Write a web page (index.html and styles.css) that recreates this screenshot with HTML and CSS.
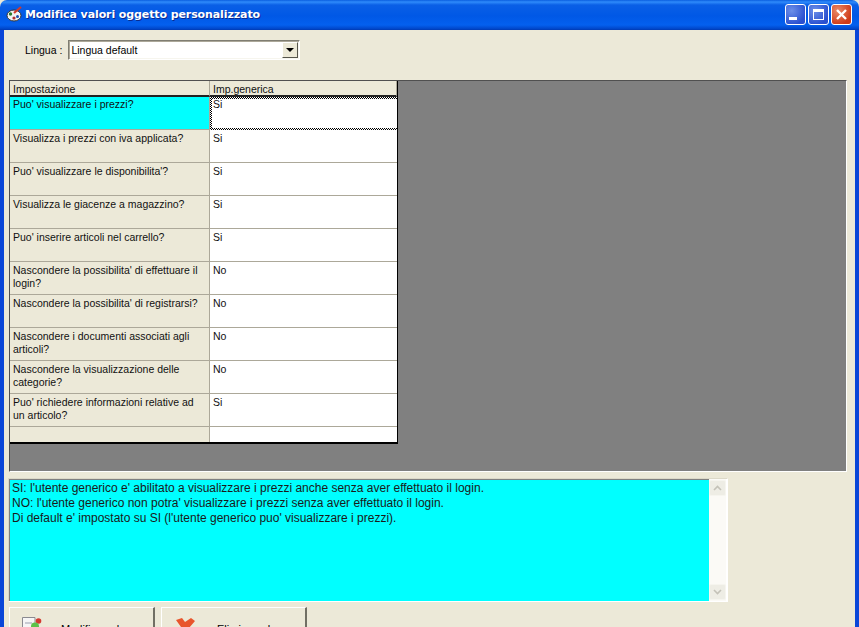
FILE: index.html
```html
<!DOCTYPE html>
<html lang="it">
<head>
<meta charset="utf-8">
<title>Modifica valori oggetto personalizzato</title>
<link rel="stylesheet" href="styles.css">
</head>
<body>
<div class="window">
  <header class="titlebar">
    <svg class="appicon" width="17" height="16" viewBox="0 0 17 16">
      <ellipse cx="8" cy="9.5" rx="7" ry="5.5" fill="#f2f2f2" stroke="#333"/>
      <circle cx="4.5" cy="8" r="1.7" fill="#2a7a2a"/><circle cx="8" cy="12" r="1.6" fill="#b03030"/><circle cx="11.5" cy="10.5" r="1.5" fill="#2050b0"/>
      <path d="M8 7 L15 1" stroke="#d23a2a" stroke-width="2.2"/>
    </svg>
    <span class="title">Modifica valori oggetto personalizzato</span>
    <div class="controls">
      <span class="ctl"><i class="min"></i></span>
      <span class="ctl"><i class="max"></i></span>
      <span class="ctl close"><svg width="13" height="13" viewBox="0 0 13 13"><path d="M2 2 L11 11 M11 2 L2 11" stroke="#fff" stroke-width="2.4"/></svg></span>
    </div>
  </header>
  <main class="client">
    <div class="langrow">
      <label class="langlabel">Lingua :</label>
      <div class="combo"><span class="comboval">Lingua default</span><span class="combobtn"><i></i></span></div>
    </div>
    <section class="panel">
      <div class="grid">
        <div class="cell head">Impostazione</div><div class="cell head">Imp.generica</div>
        <div class="cell key cur">Puo' visualizzare i prezzi?</div><div class="cell val focus">Si</div>
        <div class="cell key">Visualizza i prezzi con iva applicata?</div><div class="cell val">Si</div>
        <div class="cell key">Puo' visualizzare le disponibilita'?</div><div class="cell val">Si</div>
        <div class="cell key">Visualizza le giacenze a magazzino?</div><div class="cell val">Si</div>
        <div class="cell key">Puo' inserire articoli nel carrello?</div><div class="cell val">Si</div>
        <div class="cell key">Nascondere la possibilita' di effettuare il login?</div><div class="cell val">No</div>
        <div class="cell key">Nascondere la possibilita' di registrarsi?</div><div class="cell val">No</div>
        <div class="cell key">Nascondere i documenti associati agli articoli?</div><div class="cell val">No</div>
        <div class="cell key">Nascondere la visualizzazione delle categorie?</div><div class="cell val">No</div>
        <div class="cell key">Puo' richiedere informazioni relative ad un articolo?</div><div class="cell val">Si</div>
        <div class="cell key last"></div><div class="cell val last"></div>
      </div>
    </section>
    <section class="memo">
      <div class="memotext">
        <p>SI: l'utente generico e' abilitato a visualizzare i prezzi anche senza aver effettuato il login.</p>
        <p>NO: l'utente generico non potra' visualizzare i prezzi senza aver effettuato il login.</p>
        <p>Di default e' impostato su SI (l'utente generico puo' visualizzare i prezzi).</p>
      </div>
      <div class="scroll">
        <span class="sbtn"><svg width="9" height="6" viewBox="0 0 9 6"><path d="M1 5 L4.5 1.5 L8 5" fill="none" stroke="#c4c2b8" stroke-width="1.6"/></svg></span>
        <span class="sbtn"><svg width="9" height="6" viewBox="0 0 9 6"><path d="M1 1 L4.5 4.5 L8 1" fill="none" stroke="#c4c2b8" stroke-width="1.6"/></svg></span>
      </div>
    </section>
    <div class="actions">
      <button class="btn">
        <svg class="btnicon" width="24" height="24" viewBox="0 0 24 24">
          <path d="M0.5 1.5 H13 V22 H0.5 Z" fill="#f6f6f6" stroke="#8a8a90"/>
          <path d="M3 7 H10" stroke="#9aa0b0"/>
          <circle cx="16.5" cy="5" r="2.8" fill="#d23a30"/>
          <circle cx="13" cy="10.5" r="4" fill="#5cc24a"/>
        </svg>
        <span>Modifica valore</span>
      </button>
      <button class="btn">
        <svg class="btnicon" width="24" height="24" viewBox="0 0 24 24">
          <path d="M2 4 L8 2 L11 6 L17 2 L21 5 L15 12 L19 22 L13 23 L10 16 L5 23 L1 20 L7 11 Z" fill="#e8552c"/>
        </svg>
        <span>Elimina valore</span>
      </button>
    </div>
  </main>
</div>
</body>
</html>
```
FILE: styles.css
```css
* { box-sizing: border-box; }
html, body { margin: 0; padding: 0; height: 627px; overflow: hidden; }
body { font-family: "Liberation Sans", Arial, sans-serif; font-size: 10.5px; color: #000; background: #ece9d8; }

.window { width: 859px; height: 627px; display: flex; flex-direction: column; overflow: hidden; }

.titlebar {
  flex: 0 0 30px;
  display: flex;
  align-items: center;
  padding: 0 7px 2px 6px;
  background: linear-gradient(180deg, #0a5ee0 0, #2f8bfb 2px, #0a5fe6 5px, #0058e6 16px, #0460ef 25px, #0045c8 29px, #0038b0 30px);
  border-radius: 7px 7px 0 0;
}
.appicon { flex: none; margin-right: 2px; }
.title {
  color: #fff; font-family: "DejaVu Sans", sans-serif; font-weight: 700; font-size: 11px; letter-spacing: -0.1px;
  text-shadow: 1px 1px 0 #0a2a90; white-space: nowrap;
}
.controls { margin-left: auto; display: flex; gap: 2px; }
.ctl {
  width: 21px; height: 21px; border: 1px solid #fff; border-radius: 3px;
  background: radial-gradient(circle at 30% 30%, #6c8fe8, #2a50d0 75%);
  display: flex; align-items: center; justify-content: center;
}
.ctl.close { background: radial-gradient(circle at 30% 30%, #ea8a68, #cf3a18 75%); }
.min { display: block; width: 8px; height: 3px; background: #fff; margin: 9px 5px 0 0; }
.max { display: block; width: 11px; height: 11px; border: 1px solid #fff; border-top-width: 3px; }

.client {
  flex: 1; min-height: 0; display: flex; flex-direction: column;
  background: #ece9d8;
  border-left: 4px solid #0a46d8; border-right: 4px solid #0a46d8;
  padding: 0 9px 0 5px;
}

.langrow { flex: none; height: 50px; display: flex; align-items: flex-start; padding: 10px 0 0 16px; }
.langlabel { margin: 4px 6px 0 0; white-space: nowrap; }
.combo {
  width: 232px; height: 20px; display: flex; align-items: center; background: #fff;
  border: 1px solid; border-color: #7f7d72 #fff #fff #7f7d72;
  box-shadow: inset 1px 1px 0 #aca899, inset -1px -1px 0 #f6f5ee;
  padding: 1px;
}
.comboval { flex: 1; padding-left: 1px; }
.combobtn {
  flex: none; width: 16px; height: 16px; display: flex; align-items: center; justify-content: center;
  background: #ece9d8; border: 1px solid; border-color: #fff #55544c #55544c #fff;
}
.combobtn i { display: block; border: 4px solid transparent; border-top: 4px solid #000; border-bottom: 0; }

.panel {
  flex: none; height: 392px; width: 838px; background: #808080;
  border: 1px solid; border-color: #505050 #fff #fff #505050;
}
.grid {
  width: 388px; display: grid; grid-template-columns: 200px 187px;
  grid-template-rows: 16px repeat(10, 33px) 15px;
  border-right: 1px solid #000; border-bottom: 2px solid #000;
  background: #aca899;
}
.cell {
  padding: 2px 2px 0 3px; line-height: 13px; overflow: hidden;
  border-right: 1px solid #aca899; border-bottom: 1px solid #aca899;
  color: #111;
}
.head { background: #ece9d8; border-bottom: 2px solid #222; padding-top: 2px; }
.key { background: #ece9d8; }
.key.cur { background: #00ffff; padding-top: 1px; }
.val { background: #fff; }
.val:nth-child(even) { border-right: 0; }
.focus {
  padding: 0 0 0 1px;
  line-height: 11px;
  border: 2px solid transparent;
  background: linear-gradient(#fff, #fff) padding-box, repeating-conic-gradient(#000 0 25%, #fff 0 50%) 0 0 / 2px 2px border-box;
}
.last { border-bottom: 0; }

.memo {
  flex: none; margin-top: 6px; width: 720px; height: 124px; display: flex;
  border: 1px solid; border-color: #dcd9c8 #fff #fff #dcd9c8;
  background: #fff;
  margin-left: -1px;
}
.memotext {
  flex: 1; background: #00ffff; padding: 1px 2px; font-size: 12px; line-height: 15px; color: #1a1a1a;
  border-top: 1px solid #808080; border-left: 1px solid #808080;
}
.memotext p { margin: 0; }
.scroll {
  flex: none; width: 17px; display: flex; flex-direction: column; justify-content: space-between;
  background: #fbfaf6; padding: 1px 0; margin-right: 1px;
}
.sbtn {
  height: 16px; display: flex; align-items: center; justify-content: center;
  background: #eeede5; border: 1px solid #f6f5ef; border-radius: 2px;
}

.actions { flex: none; margin-top: 5px; display: flex; gap: 6px; }
.btn {
  flex: none; width: 146px; height: 40px; display: flex; align-items: flex-start; gap: 15px;
  padding: 8px 0 0 12px;
  background: #ece9d8; font: inherit; font-size: 11px; color: #000;
  border: 1px solid; border-color: #fff #716f64 #716f64 #fff;
  border-right-width: 2px;
}
.btn + .btn { gap: 19px; }
.btnicon { flex: none; }
.btn span { padding-top: 7px; white-space: nowrap; }
```
